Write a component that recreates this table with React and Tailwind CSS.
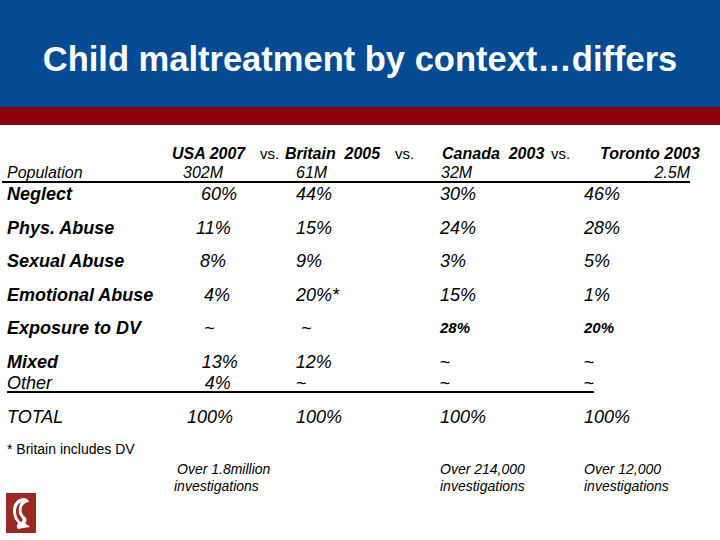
const rows = [
  { label: "Neglect", v1: "60%", p1: "pl-[29px]", v2: "44%", v3: "30%", v4: "46%", mt: "mt-[2px]" },
  { label: "Phys. Abuse", v1: "11%", p1: "pl-[24px]", v2: "15%", v3: "24%", v4: "28%", mt: "mt-[16px]" },
  { label: "Sexual Abuse", v1: "8%", p1: "pl-[28px]", v2: "9%", v3: "3%", v4: "5%", mt: "mt-[15px]" },
  { label: "Emotional Abuse", v1: "4%", p1: "pl-[32px]", v2: "20%*", v3: "15%", v4: "1%", mt: "mt-[16px]" },
  { label: "Exposure to DV", v1: "~", p1: "pl-[32px]", v2: "~", v3: "28%", v4: "20%", mt: "mt-[15px]", dv: true },
];

function Logo() {
  return (
    <svg width="30" height="40" viewBox="0 0 30 40">
      <rect width="30" height="40" fill="#9b2a25" />
      <path
        d="M18 5 C12 5 7 10 7 17 C7 23 9 27 12 30 C11 32 10 34 12 36 C15 35 19 35 24 34 C22 32 20 31 19 30 C21 28 21 25 18 23 C16 21 15 18 16 14 C17 11 20 9 23 9 C22 6 20 5 18 5 Z M15 9 C12 11 10 14 10 18 C10 23 12 27 15 29 C17 28 17 26 15 24 C12 21 12 14 15 9 Z"
        fill="#fff"
        fillRule="evenodd"
      />
    </svg>
  );
}

function Row({ r }) {
  const val = r.dv ? "font-bold" : "";
  return (
    <div className={`flex h-[18px] items-center leading-[18px] text-[18px] italic ${r.mt}`}>
      <div className="w-[172px] pl-[7px] font-bold">{r.label}</div>
      <div className={`w-[124px] ${r.p1}`}>{r.v1}</div>
      <div className={`w-[144px] ${r.v2 === "~" ? "pl-[5px]" : ""}`}>{r.v2}</div>
      <div className={`w-[144px] ${val} ${r.dv ? "text-[15px]" : ""}`}>{r.v3}</div>
      <div className={`${val} ${r.dv ? "text-[15px]" : ""}`}>{r.v4}</div>
    </div>
  );
}

export default function App() {
  return (
    <div className="w-[720px] h-[540px] bg-white text-black overflow-hidden font-['Liberation_Sans',Arial,sans-serif]">
      <div className="h-[107px] bg-[#044b93] flex items-center justify-center pt-[12px]">
        <h1 className="text-white font-bold text-[34.5px] leading-none">
          Child maltreatment by context…differs
        </h1>
      </div>
      <div className="h-[18px] bg-[#8c0010]" />

      <div className="mt-[19px] flex h-[20px] items-center text-[16px] leading-[20px]">
        <div className="w-[172px]" />
        <div className="w-[88px] font-bold italic">USA 2007</div>
        <div className="w-[25px] text-[15px]">vs.</div>
        <div className="w-[110px] font-bold italic whitespace-pre">Britain  2005</div>
        <div className="w-[47px] text-[15px]">vs.</div>
        <div className="w-[109px] font-bold italic whitespace-pre">Canada  2003</div>
        <div className="w-[49px] text-[15px]">vs.</div>
        <div className="font-bold italic">Toronto 2003</div>
      </div>

      <div className="mt-[1px] ml-[2px] flex h-[18px] w-[688px] items-end border-b-2 border-black text-[16px] italic leading-[16px]">
        <div className="w-[170px] pl-[5px]">Population</div>
        <div className="w-[124px] pl-[11px]">302M</div>
        <div className="w-[145px]">61M</div>
        <div className="flex-1">32M</div>
        <div>2.5M</div>
      </div>

      {rows.map((r) => (
        <Row key={r.label} r={r} />
      ))}

      <div className="mt-[16px] ml-[7px] w-[587px] border-b-2 border-black text-[18px] italic leading-[18px]">
        <div className="flex h-[18px] items-center">
          <div className="w-[165px] font-bold">Mixed</div>
          <div className="w-[124px] pl-[30px]">13%</div>
          <div className="w-[144px]">12%</div>
          <div className="w-[144px]">~</div>
          <div>~</div>
        </div>
        <div className="mt-[4px] flex h-[16px] items-center">
          <div className="w-[165px]">Other</div>
          <div className="w-[124px] pl-[33px]">4%</div>
          <div className="w-[144px]">~</div>
          <div className="w-[144px]">~</div>
          <div>~</div>
        </div>
      </div>

      <div className="mt-[15px] flex h-[18px] items-center text-[18px] italic leading-[18px]">
        <div className="w-[172px] pl-[7px]">TOTAL</div>
        <div className="w-[124px] pl-[15px]">100%</div>
        <div className="w-[144px]">100%</div>
        <div className="w-[144px]">100%</div>
        <div>100%</div>
      </div>

      <div className="mt-[15px] pl-[7px] text-[14px] leading-[16px]">* Britain includes DV</div>

      <div className="mt-[4px] flex text-[14px] italic leading-[17px]">
        <div className="w-[172px] pl-[6px] pt-[32px]">
          <Logo />
        </div>
        <div className="w-[268px]">
          <div className="pl-[5px]">Over 1.8million</div>
          <div className="pl-[2px]">investigations</div>
        </div>
        <div className="w-[144px]">
          <div>Over 214,000</div>
          <div>investigations</div>
        </div>
        <div>
          <div>Over 12,000</div>
          <div>investigations</div>
        </div>
      </div>
    </div>
  );
}
